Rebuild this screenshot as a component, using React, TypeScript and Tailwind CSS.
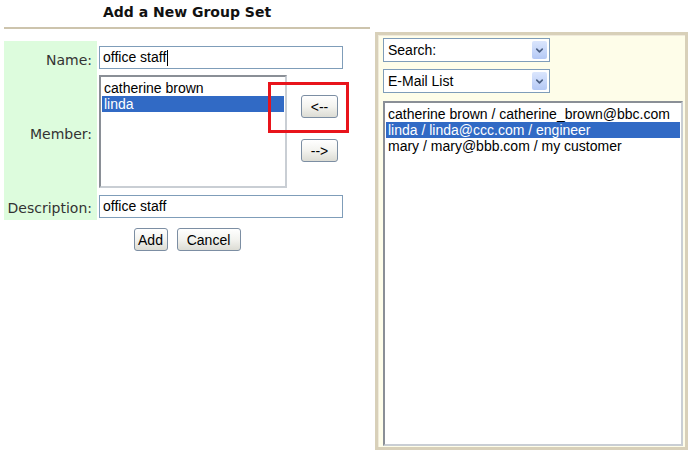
import { ChevronDown } from "lucide-react";

const ui = "font-['Liberation_Sans',Arial,sans-serif] text-[14px] text-black";
const label = "font-['DejaVu_Sans',Verdana,sans-serif] text-[14px] text-[#333]";

function XpButton({ children, className = "" }: { children: React.ReactNode; className?: string }) {
  return (
    <button
      className={`h-[23px] rounded-[3px] border border-[#7c8ea3] bg-gradient-to-b from-white via-[#f3f3ef] to-[#dcdcd4] font-['Liberation_Sans',Arial,sans-serif] text-[14px] leading-none text-black ${className}`}
    >
      {children}
    </button>
  );
}

function XpSelect({ value }: { value: string }) {
  return (
    <div className="flex h-[24px] w-[167px] items-center border border-[#7f9db9] bg-white p-[2px]">
      <span className={`flex-1 pl-[2px] ${ui} leading-none`}>{value}</span>
      <span className="flex h-[18px] w-[15px] items-center justify-center rounded-[2px] bg-gradient-to-b from-[#dbe6fd] to-[#b5c9f5]">
        <ChevronDown className="h-[11px] w-[11px] text-[#4d6185]" strokeWidth={3.5} />
      </span>
    </div>
  );
}

export default function App() {
  const members = ["catherine brown", "linda"];
  const emails = [
    "catherine brown / catherine_brown@bbc.com",
    "linda / linda@ccc.com / engineer",
    "mary / mary@bbb.com / my customer",
  ];

  return (
    <div className="flex h-[454px] w-[692px] bg-white pl-[4px]">
      {/* Left: group form */}
      <div className="flex w-[366px] flex-col">
        <div className="flex h-[29px] items-center justify-center border-b-2 border-[#cdc4ad]">
          <h1 className="font-['DejaVu_Sans',Verdana,sans-serif] text-[14px] font-bold text-[#111] -mt-[3px]">
            Add a New Group Set
          </h1>
        </div>

        <div className="mt-[12px] grid grid-cols-[93px_1fr]">
          <div className={`flex items-center justify-end bg-[#ddfcdd] pr-[5px] pt-[8px] ${label}`}>Name:</div>
          <div className="pl-[2px] pt-[5px] pb-[3px]">
            <div className={`flex h-[23px] w-[244px] items-center border border-[#7f9db9] bg-white pl-[3px] ${ui}`}>
              office staff<span className="ml-[1px] h-[16px] w-px bg-black" />
            </div>
          </div>

          <div className={`flex items-center justify-end bg-[#ddfcdd] pr-[5px] pt-[6px] ${label}`}>Member:</div>
          <div className="relative flex py-[3px] pl-[2px]">
            <div className={`h-[113px] w-[188px] border-2 border-t-[#8a8f96] border-l-[#8a8f96] border-r-[#c9ced4] border-b-[#c9ced4] bg-white p-[1px] pt-[3px] ${ui}`}>
              {members.map((m, i) => (
                <div
                  key={m}
                  className={`h-[16px] pl-[2px] leading-[16px] ${i === 1 ? "bg-[#316ac5] text-white" : ""}`}
                >
                  {m}
                </div>
              ))}
            </div>
            <div className="ml-[14px] flex flex-col pt-[20px]">
              <XpButton className="w-[37px]">&lt;--</XpButton>
              <XpButton className="mt-[21px] w-[37px]">--&gt;</XpButton>
            </div>
            {/* highlight marker */}
            <div className="absolute left-[171px] top-[10px] h-[51px] w-[81px] border-[3px] border-[#e8141b]" />
          </div>

          <div className={`flex items-center justify-end bg-[#ddfcdd] pr-[5px] pt-[6px] ${label}`}>Description:</div>
          <div className="pl-[2px] pt-[4px] pb-[2px]">
            <div className={`flex h-[23px] w-[244px] items-center border border-[#7f9db9] bg-white pl-[3px] ${ui}`}>
              office staff
            </div>
          </div>
        </div>

        <div className="mt-[8px] flex justify-center gap-[9px]">
          <XpButton className="w-[34px]">Add</XpButton>
          <XpButton className="w-[64px]">Cancel</XpButton>
        </div>
      </div>

      {/* Right: address picker */}
      <div className="ml-[5px] mt-[32px] flex h-[418px] w-[313px] flex-col border-[3px] border-[#d8d0b9] bg-[#fefde9] pl-[5px] pr-[2px] pt-[3px] shadow-[inset_1px_1px_0_#efeadb]">
        <XpSelect value="Search:" />
        <div className="mt-[7px]">
          <XpSelect value="E-Mail List" />
        </div>
        <div className={`mt-[8px] h-[345px] w-[300px] border-2 border-t-[#8a8f96] border-l-[#8a8f96] border-r-[#c9ced4] border-b-[#c9ced4] bg-white p-[1px] pt-[3px] ${ui} text-[14.4px]`}>
          {emails.map((e, i) => (
            <div
              key={e}
              className={`h-[16px] pl-[2px] leading-[16px] whitespace-nowrap ${i === 1 ? "bg-[#316ac5] text-white" : ""}`}
            >
              {e}
            </div>
          ))}
        </div>
      </div>
    </div>
  );
}
